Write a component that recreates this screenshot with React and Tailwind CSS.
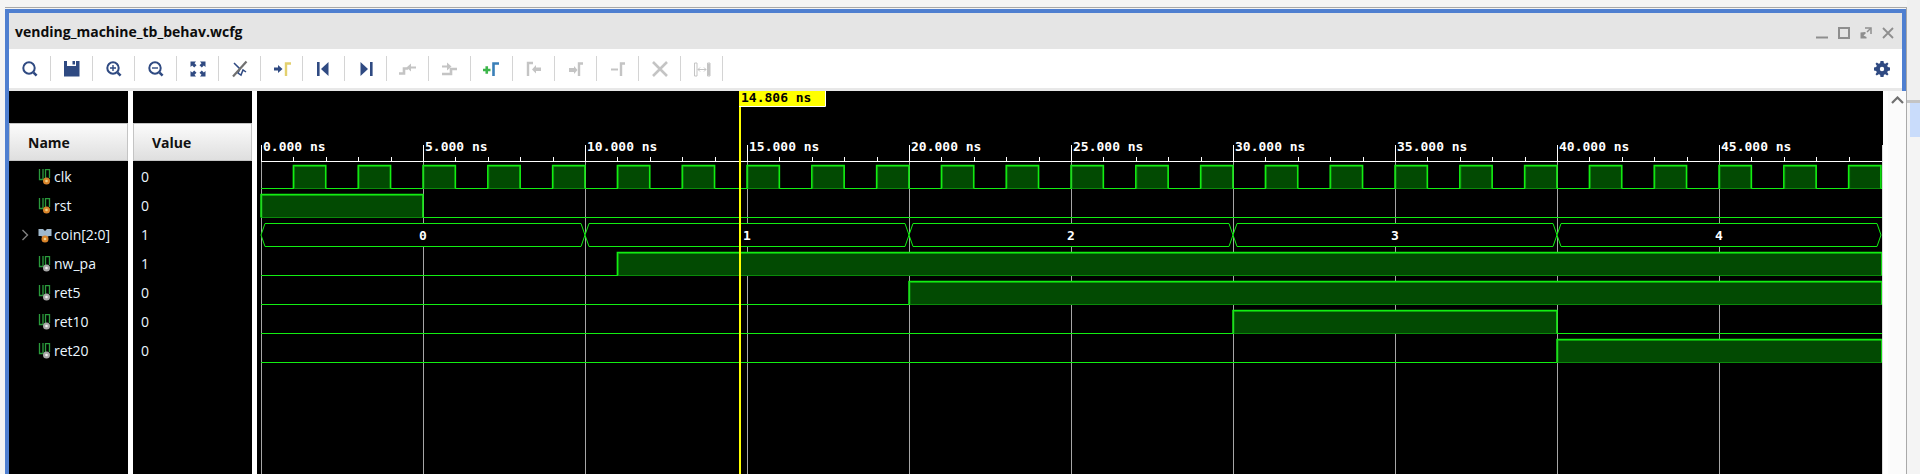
import React from 'react'

const NAVY = '#2f4a82'
const GRAY = '#c4c4c4'

const Tb = ({ children }) => (
  <svg width="18" height="18" viewBox="0 0 18 18" fill="none">{children}</svg>
)

const Lens = ({ children }) => (
  <Tb>
    <circle cx="8" cy="8" r="5.7" stroke={NAVY} strokeWidth="2" />
    <path d="M12.6 12.6L15.6 15.6" stroke={NAVY} strokeWidth="2.6" />
    {children}
  </Tb>
)

// markers in the toolbar share the same yellow/blue/grey step glyph
const Step = ({ color, x = 12 }) => <path d={`M${x + 1} 16V3.5H${x + 6}`} stroke={color} strokeWidth="2.4" />

const toolbarIcons = [
  <Lens key="search" />,
  <Tb key="save"><path d="M1 1H4V6H13V1H16.500V16.500H1Z" fill={NAVY} /><rect x="9.500" y="1" width="2.500" height="3.500" fill={NAVY} /></Tb>,
  <Lens key="in"><path d="M8 5V11M5 8H11" stroke={NAVY} strokeWidth="1.400" /></Lens>,
  <Lens key="out"><path d="M5 8H11" stroke={NAVY} strokeWidth="1.400" /></Lens>,
  <Tb key="fit">
    <path d="M1.500 1.500H7L5.500 3.200L7.500 5.200L5.200 7.500L3.200 5.500L1.500 7ZM16.500 1.500H11L12.500 3.200L10.500 5.200L12.800 7.500L14.800 5.500L16.500 7ZM1.500 16.500H7L5.500 14.800L7.500 12.800L5.200 10.500L3.200 12.500L1.500 11ZM16.500 16.500H11L12.500 14.800L10.500 12.800L12.800 10.500L14.800 12.500L16.500 11Z" fill={NAVY} />
  </Tb>,
  <Tb key="snap">
    <path d="M3 3L9 9L7 13L10 15L12 10L15 12" stroke={NAVY} strokeWidth="1.500" />
    <path d="M2 16.500L15.500 1.500" stroke="#707070" strokeWidth="2.200" />
  </Tb>,
  <Tb key="cursor"><path d="M1 7.500H5V5L9.500 9L5 13V10.500H1Z" fill={NAVY} /><Step color="#e3d06e" /></Tb>,
  <Tb key="first"><rect x="2" y="2" width="2.600" height="14" fill={NAVY} /><path d="M13.500 2V16L6 9Z" fill={NAVY} /></Tb>,
  <Tb key="last"><path d="M3.500 2V16L11 9Z" fill={NAVY} /><rect x="13" y="2" width="2.600" height="14" fill={NAVY} /></Tb>,
  <Tb key="prev"><path d="M0 13.500H5V8.500H9" stroke={GRAY} strokeWidth="2.600" /><path d="M17 6.500H12V3.500L7.500 7.500L12 11.500V8.500H17Z" fill={GRAY} /></Tb>,
  <Tb key="next"><path d="M1 5.500H6V2.500L10.500 6.500L6 10.500V7.500H1Z" fill={GRAY} /><path d="M1 14H10V9H16" stroke={GRAY} strokeWidth="2.600" /></Tb>,
  <Tb key="add">
    <path d="M0 10H7.500M3.750 6.250V13.750" stroke="#3cb54a" strokeWidth="2.600" />
    <path d="M10.500 16V3.500H16" stroke="#3a7fb8" strokeWidth="2.600" />
  </Tb>,
  <Tb key="swapl"><path d="M3 16V3H8" stroke={GRAY} strokeWidth="2.400" /><path d="M16 7.500H11V5L7 9.500L11 13.500V11H16Z" fill={GRAY} /></Tb>,
  <Tb key="swapr"><path d="M2 8H7V6L10.500 10L7 14V12H2Z" fill={GRAY} /><path d="M12 16V3.500H16" stroke={GRAY} strokeWidth="2.400" /></Tb>,
  <Tb key="remove"><path d="M2 9.500H9" stroke={GRAY} strokeWidth="2" /><path d="M12 16V3.500H16" stroke={GRAY} strokeWidth="2.400" /></Tb>,
  <Tb key="x"><path d="M2 2L16 16M16 2L2 16" stroke={GRAY} strokeWidth="2.600" /></Tb>,
  <Tb key="span"><path d="M1.500 3V16H4V3ZM14.500 3V16H17V3Z" fill="none" stroke={GRAY} /><path d="M14.500 3.500H17V15.500H14.500Z" fill={GRAY} /><path d="M5 9.500H13M7 7.500L5 9.500L7 11.500M11 7.500L13 9.500L11 11.500" stroke={GRAY} /></Tb>,
]

const Gear = () => (
  <svg width="16" height="16" viewBox="0 0 16 16">
    <path fillRule="evenodd" d="M6.500 0H9.500L9.900 2.200L11.300 2.800L13.200 1.500L14.500 2.800L13.200 4.700L13.800 6.100L16 6.500V9.500L13.800 9.900L13.200 11.300L14.500 13.200L13.200 14.500L11.300 13.200L9.900 13.800L9.500 16H6.500L6.100 13.800L4.700 13.200L2.800 14.500L1.500 13.200L2.800 11.300L2.200 9.900L0 9.500V6.500L2.200 6.100L2.800 4.700L1.500 2.800L2.800 1.500L4.700 2.800L6.100 2.200ZM8 5.800A2.200 2.200 0 1 0 8 10.200A2.200 2.200 0 1 0 8 5.800Z" fill={NAVY} />
  </svg>
)

const SignalIcon = ({ bus, input }) => (
  <svg width="14" height="16" viewBox="0 0 14 16" fill="none" className="shrink-0">
    {bus ? (
      <path d="M0.500 2H5L7 4L9 2H13.500V9H11L7 11L3 9H0.500Z" fill="#9fb8cc" />
    ) : (
      <path d="M1.500 0V10.500H5V0M7.500 9V0.500H11.500V9" stroke="#2a9a3c" strokeWidth="1.300" />
    )}
    <circle cx={bus ? 7 : 8.500} cy="12" r="3.500" fill={input ? '#d9842a' : '#a8a8a8'} />
    <circle cx={bus ? 7 : 8.500} cy="12" r="1.300" fill={input ? '#f2d28a' : '#f0f0f0'} />
  </svg>
)

const signals = [
  { name: 'clk', value: '0', input: true },
  { name: 'rst', value: '0', input: true },
  { name: 'coin[2:0]', value: '1', input: true, bus: true },
  { name: 'nw_pa', value: '1' },
  { name: 'ret5', value: '0' },
  { name: 'ret10', value: '0' },
  { name: 'ret20', value: '0' },
]

const Header = ({ label }) => (
  <div className="h-[38px] flex items-center pl-[18px] bg-gradient-to-b from-[#fbfbfb] to-[#dfdfdf] border border-[#c4c4c4] text-[14px] font-bold text-[#111]">
    {label}
  </div>
)

const Pane = ({ label, children }) => (
  <div className="w-[119px] shrink-0 bg-black flex flex-col pt-[32px]">
    <Header label={label} />
    <div className="pt-[1px]">{children}</div>
  </div>
)

// wave canvas geometry, px
const PX_NS = 32.4
const X0 = 4
const END = 50.03
const x = (ns) => X0 + PX_NS * ns
const lowY = (row) => 97.5 + row * 29
const GREEN = '#12ee12'

const HighBlock = ({ row, from, to }) => {
  const top = lowY(row) - 23
  const low = lowY(row)
  return (
    <g>
      <rect x={x(from) + 1} y={top + 1} width={x(to) - x(from) - 1.500} height={22} fill="#024a02" stroke="#0a8a0a" />
      <path d={`M${x(from)} ${low}V${top}H${x(to)}V${low}`} fill="none" stroke={GREEN} strokeWidth="1.500" />
    </g>
  )
}

const Digital = ({ row, highs }) => (
  <g>
    <path d={`M${x(0)} ${lowY(row)}H${x(END)}`} stroke={GREEN} />
    {highs.map(([a, b]) => <HighBlock key={a} row={row} from={a} to={b} />)}
  </g>
)

const clockHighs = Array.from({ length: 25 }, (_, i) => [2 * i + 1, Math.min(2 * i + 2, END)])

const busSegments = [[0, 10, '0'], [10, 20, '1'], [20, 30, '2'], [30, 40, '3'], [40, 50, '4']]

const monoText = { fontFamily: '"DejaVu Sans Mono", monospace', fontWeight: 700, fontSize: 13 }

const WaveCanvas = () => {
  const majors = Array.from({ length: 10 }, (_, i) => i * 5)
  const minors = Array.from({ length: 51 }, (_, i) => i).filter((n) => n % 5 !== 0)
  return (
    <svg width="1626" height="383" viewBox="0 0 1626 383" className="block">
      <rect width="1626" height="383" fill="#000" />
      {majors.map((n) => (
        <g key={n}>
          <path d={`M${Math.round(x(n)) + 0.500} 54V70`} stroke="#fff" />
          <path d={`M${Math.round(x(n)) + 0.500} 70V383`} stroke="#a6a6a6" />
          <text x={x(n) + 2} y="60" fill="#fff" style={monoText}>{`${n}.000 ns`}</text>
        </g>
      ))}
      {minors.map((n) => (
        <path key={n} d={`M${Math.round(x(n)) + 0.500} 66V70`} stroke="#fff" />
      ))}
      <path d="M4 70.500H1626" stroke="#fff" />

      <Digital row={0} highs={clockHighs} />
      <Digital row={1} highs={[[0, 5]]} />
      {busSegments.map(([a, b, v]) => (
        <g key={a}>
          <path
            d={`M${x(a) + 4} 132.500H${x(b) - 4}L${x(b)} 144L${x(b) - 4} 155.500H${x(a) + 4}L${x(a)} 144Z`}
            fill="#000"
            stroke={GREEN}
          />
          <text x={x((a + b) / 2)} y="148.500" fill="#fff" textAnchor="middle" style={monoText}>{v}</text>
        </g>
      ))}
      <Digital row={3} highs={[[11, END]]} />
      <Digital row={4} highs={[[20, END]]} />
      <Digital row={5} highs={[[30, 40]]} />
      <Digital row={6} highs={[[40, END]]} />

      <rect x="1625" y="54" width="1" height="329" fill="#dcdcdc" />

      <rect x="482" y="15" width="2" height="368" fill="#ffff00" />
      <rect x="482" y="0" width="86" height="15" fill="#ffff00" />
      <path d="M482 15.500H568.500V0" fill="none" stroke="#fff" />
      <text x="484" y="11" fill="#000" style={monoText}>14.806 ns</text>
    </svg>
  )
}

export default function App() {
  return (
    <div
      className="w-[1920px] h-[474px] overflow-hidden flex bg-[#f4f4f4] text-white"
      style={{ fontFamily: '"Open Sans", "Noto Sans", sans-serif' }}
    >
      <div className="w-[5px] shrink-0" />
      <div className="w-[902px] grow flex flex-col pt-[7px]">
        <div className="h-[2px] shrink-0 border-t border-[#a8a8a8]" />
        <div className="grow flex flex-col min-h-0 border-x-[4px] border-t-[4px] border-[#4f7fd0] bg-white">
          <div className="h-[36px] shrink-0 bg-[#e5e5e5] flex items-center justify-between pl-[6px] pr-[8px]">
            <span className="text-[14px] font-bold text-[#0c0c0c]">vending_machine_tb_behav.wcfg</span>
            <div className="flex items-center gap-[10px] mt-[3px]">
              <svg width="12" height="12" viewBox="0 0 12 12"><path d="M0 10.500H12" stroke="#8e8e8e" strokeWidth="2" /></svg>
              <svg width="12" height="12" viewBox="0 0 12 12" fill="none"><rect x="1" y="1" width="10" height="10" stroke="#8e8e8e" strokeWidth="2" /></svg>
              <svg width="12" height="12" viewBox="0 0 12 12" fill="none">
                <path d="M5 1H11V7" stroke="#8e8e8e" strokeWidth="1.500" />
                <path d="M0.500 5.500V11.500H6.500V10L3.500 8.500L6 6L5 5Z" fill="#8e8e8e" />
                <path d="M7 5L10.500 1.500" stroke="#8e8e8e" strokeWidth="1.500" />
              </svg>
              <svg width="12" height="12" viewBox="0 0 12 12"><path d="M1 1L11 11M11 1L1 11" stroke="#8e8e8e" strokeWidth="1.800" /></svg>
            </div>
          </div>
          <div className="h-[39px] shrink-0 flex items-center justify-between pr-[12px]">
            <div className="flex items-center">
              {toolbarIcons.map((icon, i) => (
                <div key={i} className="w-[42px] h-[25px] flex items-center justify-center border-r border-[#d4d4d4]">
                  {icon}
                </div>
              ))}
            </div>
            <Gear />
          </div>
          <div className="h-[3px] shrink-0 bg-[#e8e8e8]" />
          <div className="grow flex min-h-0 gap-[5px] bg-white">
            <Pane label="Name">
              {signals.map((s) => (
                <div key={s.name} className="h-[29px] flex items-center relative pl-[29px] text-[14px] text-[#eaf6ff]">
                  {s.bus && (
                    <svg width="8" height="12" viewBox="0 0 8 12" fill="none" className="absolute left-[12px]">
                      <path d="M1.500 1L6.500 6L1.500 11" stroke="#808080" strokeWidth="1.400" />
                    </svg>
                  )}
                  <SignalIcon bus={s.bus} input={s.input} />
                  <span className="ml-[2px]">{s.name}</span>
                </div>
              ))}
            </Pane>
            <Pane label="Value">
              {signals.map((s) => (
                <div key={s.name} className="h-[29px] flex items-center pl-[8px] text-[14px] text-[#eaf6ff]">
                  {s.value}
                </div>
              ))}
            </Pane>
            <div className="w-[1626px] shrink-0">
              <WaveCanvas />
            </div>
            <div className="w-[18px] shrink-0 bg-[#fbfbfb] flex justify-center pt-[5px]">
              <svg width="13" height="8" viewBox="0 0 13 8" fill="none"><path d="M1 7L6.500 1.500L12 7" stroke="#707070" strokeWidth="2.200" /></svg>
            </div>
          </div>
        </div>
      </div>
      <div className="w-[1px] shrink-0 bg-[#a9a9a9] mt-[7px]" />
      <div className="w-[13px] shrink-0 flex flex-col">
        <div className="h-[100px] shrink-0 bg-[#f0f0f0]" />
        <div className="h-[3px] shrink-0 bg-[#c4c4c4]" />
        <div className="h-[34px] shrink-0 ml-[3px] bg-[#c9dcfb]" />
      </div>
    </div>
  )
}
